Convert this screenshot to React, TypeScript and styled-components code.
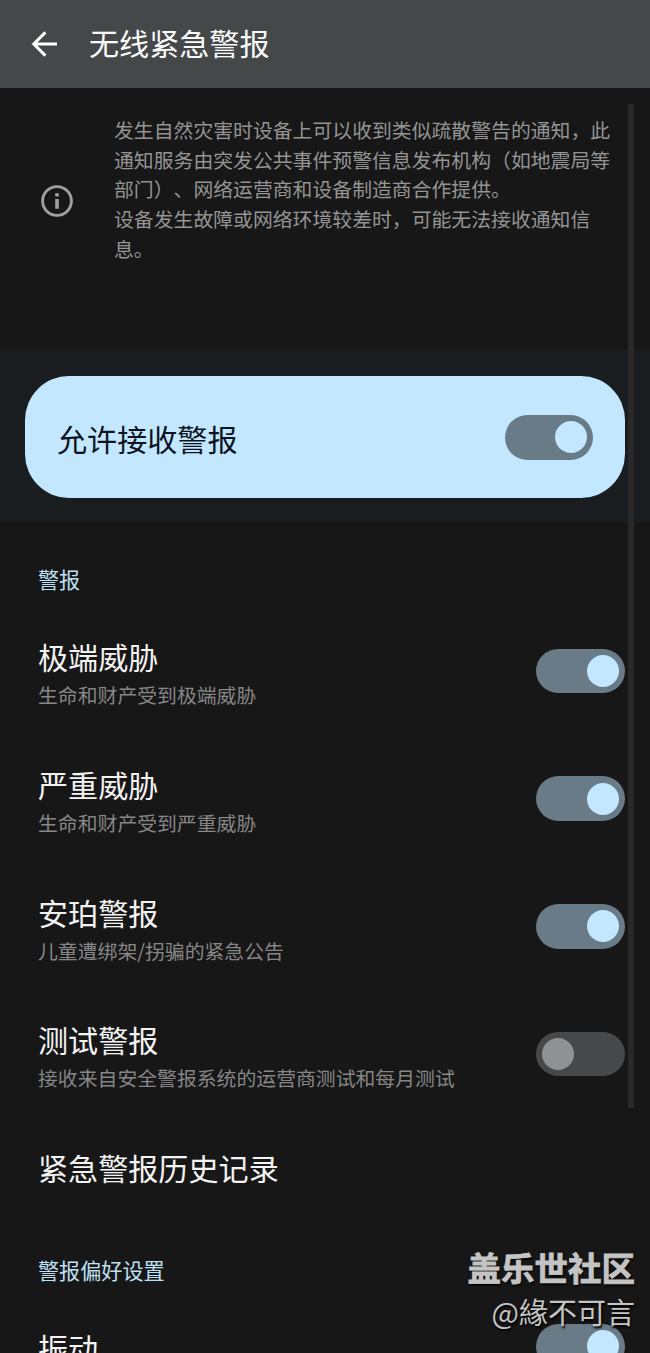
import React from "react";
import styled, { createGlobalStyle } from "styled-components";

const GlobalStyle = createGlobalStyle`
  * { box-sizing: border-box; }
  body {
    margin: 0;
    background: #171717;
    font-family: "Noto Sans CJK SC", "Noto Sans", sans-serif;
  }
`;

const Screen = styled.main`
  position: relative;
  display: flex;
  flex-direction: column;
  width: 650px;
  height: 1353px;
  overflow: hidden;
  background: #171717;
  color: #f3f3f3;
`;

const Header = styled.header`
  display: flex;
  flex: none;
  align-items: center;
  height: 88px;
  padding-left: 29px;
  gap: 29px;
  background: #454849;
`;

const Title = styled.h1`
  margin: 0 0 4px;
  font-size: 30.1px;
  font-weight: 400;
  line-height: 44px;
  color: #fafafa;
`;

const BackIcon = styled.svg`
  display: block;
  flex: none;
  width: 31px;
  height: 30px;
`;

const Notice = styled.section`
  display: flex;
  flex: none;
  height: 263px;
  padding: 27px 0 0 41px;
`;

const InfoIcon = styled.svg`
  flex: none;
  width: 32px;
  height: 32px;
  margin: 70px 41px 0 0;
`;

const NoticeText = styled.p`
  margin: 0;
  font-size: 19.85px;
  line-height: 29.7px;
  white-space: nowrap;
  text-spacing-trim: space-all;
  color: #949494;
`;

const Highlight = styled.section`
  flex: none;
  height: 171px;
  padding: 25px 25px 0;
  background: #191d1f;
`;

const MasterCard = styled.div`
  display: flex;
  justify-content: space-between;
  height: 122px;
  padding: 39px 32px 0;
  border-radius: 44px;
  background: #c2e7ff;
`;

const MasterLabel = styled.span`
  font-size: 30.1px;
  line-height: 46px;
  color: #0b1420;
`;

const Track = styled.span<{ $on: boolean }>`
  display: flex;
  flex: none;
  align-items: center;
  justify-content: ${(p) => (p.$on ? "flex-end" : "flex-start")};
  width: 88.5px;
  height: 44.5px;
  padding: 0 6px;
  border-radius: 23px;
  background: ${(p) => (p.$on ? "#687b86" : "#464849")};
`;

const Thumb = styled.span<{ $on: boolean }>`
  width: 32px;
  height: 32px;
  border-radius: 50%;
  background: ${(p) => (p.$on ? "#c2e7ff" : "#8f9192")};
`;

const SectionLabel = styled.h2<{ $top: number }>`
  flex: none;
  margin: ${(p) => p.$top}px 0 0 38px;
  font-size: 21.1px;
  font-weight: 400;
  line-height: 32px;
  color: #bfe0f5;
`;

const List = styled.div`
  display: flex;
  flex: none;
  flex-direction: column;
  margin-top: 39px;
`;

const Row = styled.div<{ $height?: number }>`
  display: flex;
  flex: none;
  justify-content: space-between;
  height: ${(p) => p.$height ?? 127.8}px;
  padding: 0 25.5px 0 38px;
`;

const RowTitle = styled.div`
  font-size: 30.1px;
  line-height: 44px;
`;

const RowDetail = styled.div`
  margin-top: 2px;
  font-size: 19.85px;
  line-height: 30px;
  color: #868686;
`;

const SwitchSlot = styled.div<{ $top: number }>`
  display: flex;
  align-items: flex-start;
  margin-top: ${(p) => p.$top}px;
`;

const Scrollbar = styled.div`
  position: absolute;
  top: 104px;
  left: 628px;
  width: 6px;
  height: 1004px;
  background: #292929;
`;

const Watermark = styled.div`
  position: absolute;
  right: 15px;
  bottom: 20px;
  display: flex;
  flex-direction: column;
  align-items: flex-end;
  color: #c4c4c4;
  text-shadow: 1px 2px 2px #000;
`;

const Community = styled.span`
  font-size: 33.5px;
  font-weight: 700;
  line-height: 44px;
  -webkit-text-stroke: 0.8px #c4c4c4;
`;

const Author = styled.span`
  font-family: "Noto Sans CJK TC", "Noto Sans", sans-serif;
  font-size: 29px;
  line-height: 44px;
`;

function Switch({ on }: { on: boolean }) {
  return (
    <Track $on={on} role="switch" aria-checked={on}>
      <Thumb $on={on} />
    </Track>
  );
}

const alerts = [
  { title: "极端威胁", detail: "生命和财产受到极端威胁", on: true },
  { title: "严重威胁", detail: "生命和财产受到严重威胁", on: true },
  { title: "安珀警报", detail: "儿童遭绑架/拐骗的紧急公告", on: true },
  { title: "测试警报", detail: "接收来自安全警报系统的运营商测试和每月测试", on: false },
];

export default function App() {
  return (
    <>
      <GlobalStyle />
      <Screen>
        <Header>
          <BackIcon viewBox="0 0 31 30" fill="none" stroke="#fff" strokeWidth="3">
            <path d="M28 15H5M16.4 3.4L4.8 15l11.6 11.6" />
          </BackIcon>
          <Title>无线紧急警报</Title>
        </Header>
        <Notice>
          <InfoIcon viewBox="0 0 32 32">
            <circle cx="16" cy="16" r="14.4" fill="none" stroke="#a0a0a0" strokeWidth="2.9" />
            <path d="M14.2 8.2h3.6v3.4h-3.6zM14.2 14h3.6v9.8h-3.6z" fill="#a0a0a0" />
          </InfoIcon>
          <NoticeText>
            发生自然灾害时设备上可以收到类似疏散警告的通知，此
            <br />
            通知服务由突发公共事件预警信息发布机构（如地震局等
            <br />
            部门）、网络运营商和设备制造商合作提供。
            <br />
            设备发生故障或网络环境较差时，可能无法接收通知信
            <br />
            息。
          </NoticeText>
        </Notice>
        <Highlight>
          <MasterCard>
            <MasterLabel>允许接收警报</MasterLabel>
            <Switch on />
          </MasterCard>
        </Highlight>
        <SectionLabel $top={41}>警报</SectionLabel>
        <List>
          {alerts.map((a) => (
            <Row key={a.title}>
              <div>
                <RowTitle>{a.title}</RowTitle>
                <RowDetail>{a.detail}</RowDetail>
              </div>
              <SwitchSlot $top={14.5}>
                <Switch on={a.on} />
              </SwitchSlot>
            </Row>
          ))}
          <Row $height={44}>
            <RowTitle>紧急警报历史记录</RowTitle>
          </Row>
        </List>
        <SectionLabel $top={65}>警报偏好设置</SectionLabel>
        <List>
          <Row>
            <RowTitle>振动</RowTitle>
            <SwitchSlot $top={-1}>
              <Switch on />
            </SwitchSlot>
          </Row>
        </List>
        <Scrollbar />
        <Watermark>
          <Community>盖乐世社区</Community>
          <Author>@緣不可言</Author>
        </Watermark>
      </Screen>
    </>
  );
}
